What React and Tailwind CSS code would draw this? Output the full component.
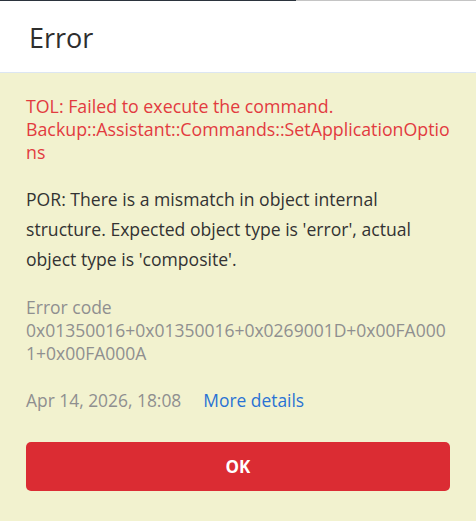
import React from 'react';

function App() {
  return (
    <div className="w-[476px] h-[521px] bg-[#f2f2cf] font-['Open_Sans',sans-serif] flex flex-col">
      {/* Top strip */}
      <div className="flex h-px">
        <div className="w-[296px] bg-[#2b333d]"></div>
        <div className="flex-1 bg-[#c4c4c4]"></div>
      </div>
      <div className="h-[72px] bg-white border-b border-[#dce6f2] flex items-center px-[29px] pt-[2px]">
        <h1 className="text-[27px] text-[#2e2e2e] leading-none">Error</h1>
      </div>

      <div className="px-[26px] pt-[22px] flex flex-col">
        <p className="text-[17.8px] leading-[23px] text-[#e23b3f] break-words">
          TOL: Failed to execute the command. Backup::Assistant::Commands::SetApplicationOptions
        </p>
        <p className="mt-[20px] text-[17.6px] leading-[30px] text-[#333333]">
          POR: There is a mismatch in object internal structure. Expected object type is 'error', actual object type is 'composite'.
        </p>
        <div className="mt-[22px] text-[17.5px] leading-[23px] text-[#8f8f8f]">
          <div>Error code</div>
          <div className="break-all">0x01350016+0x01350016+0x0269001D+0x00FA0001+0x00FA000A</div>
        </div>
        <div className="mt-[24px] flex items-center gap-[22px] text-[17.4px] leading-[23px]">
          <span className="text-[#8f8f8f]">Apr 14, 2026, 18:08</span>
          <a className="text-[#2a72d4]">More details</a>
        </div>
        <button className="mt-[30px] h-[49px] w-full rounded-[5px] bg-[#db2c33] text-white text-[17px] font-bold">
          OK
        </button>
      </div>
    </div>
  );
}

export default App;
